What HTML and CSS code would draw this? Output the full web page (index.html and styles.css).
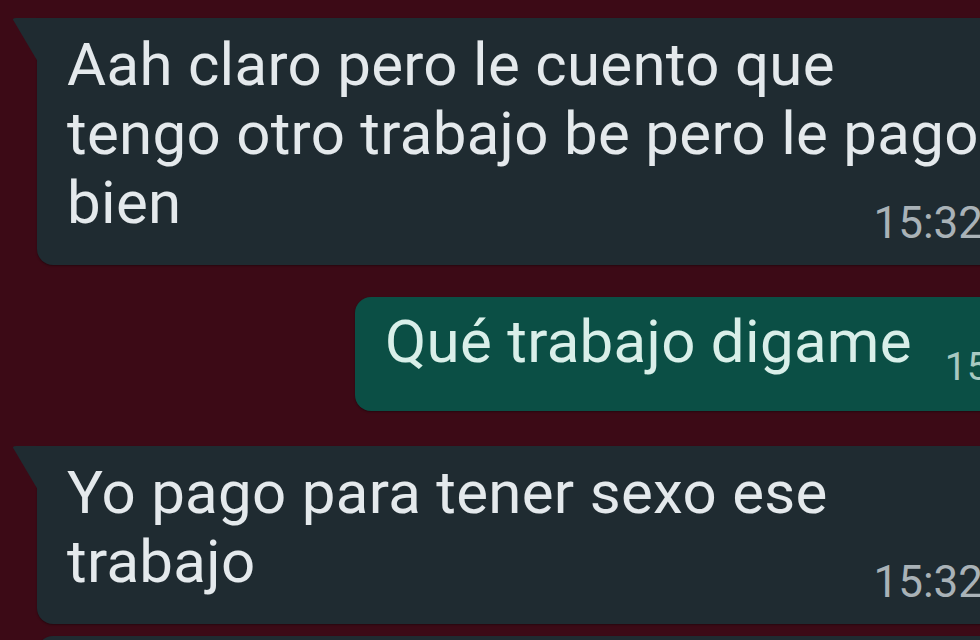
FILE: index.html
```html
<!DOCTYPE html>
<html lang="es">
<head>
    <meta charset="UTF-8">
    <meta name="viewport" content="width=device-width, initial-scale=1.0">
    <title>Chat</title>
    <link rel="stylesheet" href="styles.css">
</head>
<body>
    <div class="chat">
        <div class="msg in tail">
            <p class="text">Aah claro pero le cuento que<br>tengo otro trabajo be pero le pago<br>bien</p>
            <span class="time">15:32</span>
        </div>

        <div class="msg out">
            <p class="text">Qué trabajo digame</p>
            <span class="time">15:32</span>
        </div>

        <div class="msg in tail third">
            <p class="text">Yo pago para tener sexo ese<br>trabajo</p>
            <span class="time">15:32</span>
        </div>

        <div class="msg in next"></div>
    </div>
</body>
</html>
```

FILE: styles.css
```css
html, body{
    margin:0;
    padding:0;
    background:#3c0a16;
    overflow:hidden;
}

.chat{
    width:1040px;
    height:640px;
    display:flex;
    flex-direction:column;
    gap:32px;
    padding-top:18px;
    font-family:Roboto, "Liberation Sans", sans-serif;
}

.msg{
    position:relative;
    flex-shrink:0;
    border-radius:16px;
    box-shadow:0 1px 2px rgba(0,0,0,0.35);
}

.msg .text{
    margin:0;
    font-size:60px;
    line-height:69px;
    letter-spacing:0.3px;
    white-space:nowrap;
    color:#e4e9ec;
}

.msg .time{
    display:block;
    text-align:right;
    font-size:44px;
    line-height:44px;
    white-space:nowrap;
    color:#a9b2b7;
}

.in{
    background:#1f2b31;
    margin-left:37px;
    padding:12px 0 20px 30px;
    border-top-left-radius:0;
}

.in .time{
    margin-top:-36px;
    margin-right:57px;
}

.tail::before{
    content:"";
    position:absolute;
    left:-25px;
    top:0;
    width:26px;
    height:44px;
    background:#1f2b31;
    clip-path:polygon(0 0, 100% 0, 100% 100%);
    border-top-left-radius:4px;
}

.out{
    background:#0b4f45;
    margin-left:355px;
    padding:10px 0 25px 30px;
    display:flex;
    align-items:flex-start;
}

.out .text{
    color:#d9efe9;
}

.out .time{
    font-size:39px;
    line-height:38px;
    margin-top:41px;
    margin-left:33px;
    color:#a8c9c1;
}

.third{
    margin-top:3px;
}

.next{
    height:60px;
    padding:0;
    margin-top:-20px;
    border-top-left-radius:16px;
}
```
